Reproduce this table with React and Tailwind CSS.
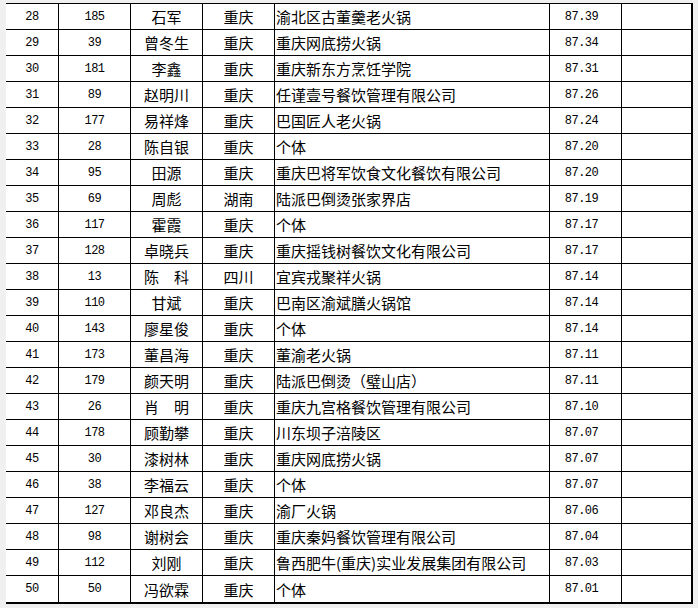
import React from "react";

const rows = [
  ["28", "185", "石军", "重庆", "渝北区古董羹老火锅", "87.39"],
  ["29", "39", "曾冬生", "重庆", "重庆网底捞火锅", "87.34"],
  ["30", "181", "李鑫", "重庆", "重庆新东方烹饪学院", "87.31"],
  ["31", "89", "赵明川", "重庆", "任谨壹号餐饮管理有限公司", "87.26"],
  ["32", "177", "易祥烽", "重庆", "巴国匠人老火锅", "87.24"],
  ["33", "28", "陈自银", "重庆", "个体", "87.20"],
  ["34", "95", "田源", "重庆", "重庆巴将军饮食文化餐饮有限公司", "87.20"],
  ["35", "69", "周彪", "湖南", "陆派巴倒烫张家界店", "87.19"],
  ["36", "117", "霍霞", "重庆", "个体", "87.17"],
  ["37", "128", "卓晓兵", "重庆", "重庆摇钱树餐饮文化有限公司", "87.17"],
  ["38", "13", "陈\u3000科", "四川", "宜宾戎聚祥火锅", "87.14"],
  ["39", "110", "甘斌", "重庆", "巴南区渝斌膳火锅馆", "87.14"],
  ["40", "143", "廖星俊", "重庆", "个体", "87.14"],
  ["41", "173", "董昌海", "重庆", "董渝老火锅", "87.11"],
  ["42", "179", "颜天明", "重庆", "陆派巴倒烫（璧山店）", "87.11"],
  ["43", "26", "肖\u3000明", "重庆", "重庆九宫格餐饮管理有限公司", "87.10"],
  ["44", "178", "顾勤攀", "重庆", "川东坝子涪陵区", "87.07"],
  ["45", "30", "漆树林", "重庆", "重庆网底捞火锅", "87.07"],
  ["46", "38", "李福云", "重庆", "个体", "87.07"],
  ["47", "127", "邓良杰", "重庆", "渝厂火锅", "87.06"],
  ["48", "98", "谢树会", "重庆", "重庆秦妈餐饮管理有限公司", "87.04"],
  ["49", "112", "刘刚", "重庆", "鲁西肥牛(重庆)实业发展集团有限公司", "87.03"],
  ["50", "50", "冯欲霖", "重庆", "个体", "87.01"],
];

const num = "font-['Liberation_Mono','DejaVu_Sans_Mono',monospace] text-[12px] tracking-[-0.5px]";
const cjk = "font-['Noto_Sans_CJK_SC',sans-serif] text-[15px]";

export default function App() {
  return (
    <div className="w-[698px] h-[608px] bg-[#f0f0f0] pl-[6px] pt-[3px] overflow-hidden">
      <div className="w-[687px] bg-white border-t border-black border-r-2 border-b-2 text-black">
        {rows.map((r, i) => (
          <div
            key={r[0]}
            className={
              "grid grid-cols-[53px_72px_72px_72px_275px_72px_69px] h-[26px] " +
              (i < rows.length - 1 ? "border-b border-black" : "h-[25px]")
            }
          >
            <div className={"flex items-center justify-center border-r border-black leading-none " + num}>{r[0]}</div>
            <div className={"flex items-center justify-center border-r border-black leading-none " + num}>{r[1]}</div>
            <div className={"flex items-center justify-center border-r border-black leading-none whitespace-pre " + cjk}>{r[2]}</div>
            <div className={"flex items-center justify-center border-r border-black leading-none " + cjk}>{r[3]}</div>
            <div className={"flex items-center justify-start pl-[1px] border-r border-black leading-none whitespace-nowrap " + cjk}>{r[4]}</div>
            <div className={"flex items-center justify-center pr-[8px] border-r border-black leading-none " + num}>{r[5]}</div>
            <div></div>
          </div>
        ))}
      </div>
    </div>
  );
}
